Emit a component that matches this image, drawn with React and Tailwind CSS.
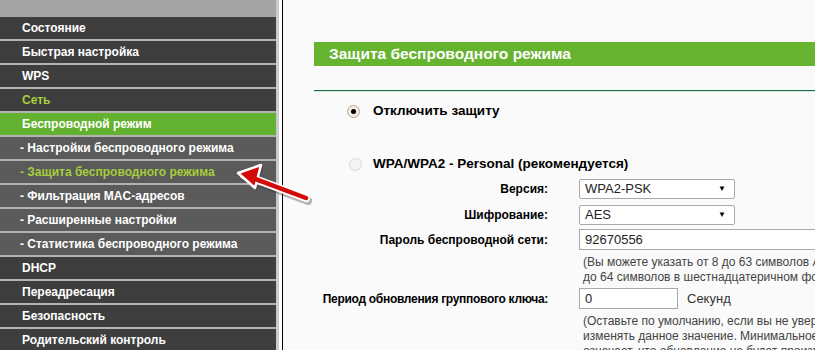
import React from "react";

const menu = [
  { label: "Состояние", kind: "main" },
  { label: "Быстрая настройка", kind: "main" },
  { label: "WPS", kind: "main" },
  { label: "Сеть", kind: "mainGreen" },
  { label: "Беспроводной режим", kind: "active" },
  { label: "- Настройки беспроводного режима", kind: "sub" },
  { label: "- Защита беспроводного режима", kind: "subGreen" },
  { label: "- Фильтрация MAC-адресов", kind: "sub" },
  { label: "- Расширенные настройки", kind: "sub" },
  { label: "- Статистика беспроводного режима", kind: "sub" },
  { label: "DHCP", kind: "main" },
  { label: "Переадресация", kind: "main" },
  { label: "Безопасность", kind: "main" },
  { label: "Родительский контроль", kind: "main" },
];

const rowStyles = {
  main: "bg-[#3e3e3e] text-white pl-[22px]",
  mainGreen: "bg-[#3e3e3e] text-[#a6cd3c] pl-[22px]",
  active: "bg-[#63b22f] text-white pl-[22px]",
  sub: "bg-[#5a5a5a] text-white pl-[20px]",
  subGreen: "bg-[#5a5a5a] text-[#a6cd3c] pl-[20px]",
};

function Radio({ checked }) {
  return checked ? (
    <span className="w-[13px] h-[13px] rounded-full border border-[#b8a996] bg-[#f1ebe3] flex items-center justify-center shrink-0">
      <span className="w-[5px] h-[5px] rounded-full bg-black" />
    </span>
  ) : (
    <span className="w-[13px] h-[13px] rounded-full border border-[#d6d6d6] bg-[#f4f4f4] shrink-0" />
  );
}

function Select({ value }) {
  return (
    <div className="w-[156px] h-[20px] border border-[#a9a9a9] rounded-[2px] bg-white flex items-center justify-between pl-[5px] pr-[8px] text-[13px] text-[#222]">
      <span>{value}</span>
      <span className="text-[8px] text-black">▼</span>
    </div>
  );
}

function Label({ children }) {
  return (
    <div className="w-[234px] shrink-0 flex justify-end font-bold text-[12px] text-black whitespace-nowrap">
      <span>{children}</span>
    </div>
  );
}

export default function App() {
  return (
    <div className="relative w-[815px] h-[350px] overflow-hidden flex bg-[#fafafa] font-['Liberation_Sans',Arial,sans-serif]">
      {/* sidebar */}
      <div className="w-[276px] shrink-0 bg-[#a4a4a4]">
        <div className="h-[17px] bg-[#a4a4a4]" />
        {menu.map((m) => (
          <div
            key={m.label}
            className={`h-[24px] border-b-2 border-[#b3b3b3] flex items-center font-bold text-[12px] whitespace-nowrap ${rowStyles[m.kind]}`}
          >
            {m.label}
          </div>
        ))}
      </div>
      <div className="w-[3px] bg-[#cbcbcb] shrink-0" />
      <div className="w-[3px] bg-white shrink-0" />
      <div className="w-[1px] bg-black shrink-0" />

      {/* content */}
      <div className="flex-1 min-w-0 pl-[31px] pt-[42px]">
        <div className="h-[24px] bg-[#65b32e] flex items-center pl-[15px] text-white font-bold text-[15.5px] whitespace-nowrap">
          Защита беспроводного режима
        </div>
        <div className="mt-[24px] h-[1px] bg-[#1d7049]" />
        <div className="h-[1px] bg-[#cfe6d6]" />

        <div className="mt-[9px] h-[20px] flex items-center pl-[33px] gap-[13px]">
          <Radio checked />
          <span className="font-bold text-[13.5px] text-black">Отключить защиту</span>
        </div>

        <div className="mt-[33px] h-[20px] flex items-center pl-[35px] gap-[11px]">
          <Radio />
          <span className="font-bold text-[13.5px] text-black whitespace-nowrap">WPA/WPA2 - Personal (рекомендуется)</span>
        </div>

        <div className="mt-[5px] flex items-center">
          <Label>Версия:</Label>
          <div className="ml-[31px]">
            <Select value="WPA2-PSK" />
          </div>
        </div>

        <div className="mt-[6px] flex items-center">
          <Label>Шифрование:</Label>
          <div className="ml-[31px]">
            <Select value="AES" />
          </div>
        </div>

        <div className="mt-[4px] flex items-center">
          <Label>Пароль беспроводной сети:</Label>
          <div className="ml-[31px] w-[260px] h-[21px] border border-[#a9a9a9] bg-white flex items-center pl-[5px] text-[13px] text-[#222] shrink-0">
            92670556
          </div>
        </div>

        <div className="mt-[5px] ml-[269px] text-[12px] leading-[15px] text-[#444] whitespace-nowrap">
          <div>(Вы можете указать от 8 до 63 символов ASCII или от 8</div>
          <div>до 64 символов в шестнадцатеричном формате.)</div>
        </div>

        <div className="mt-[3px] flex items-center">
          <Label>
            <span className="tracking-[-0.3px]">Период обновления группового ключа:</span>
          </Label>
          <div className="ml-[31px] w-[99px] h-[21px] border border-[#a9a9a9] bg-white flex items-center pl-[5px] text-[13px] text-[#222] shrink-0">
            0
          </div>
          <span className="ml-[9px] text-[13px] text-[#333]">Секунд</span>
        </div>

        <div className="mt-[5px] ml-[269px] text-[12px] leading-[15px] text-[#444] whitespace-nowrap">
          <div>(Оставьте по умолчанию, если вы не уверены, что нужно</div>
          <div>изменять данное значение. Минимальное значение 30, 0</div>
          <div>означает, что обновление не будет производиться.)</div>
        </div>
      </div>

      {/* red arrow pointing at the menu item */}
      <svg className="absolute left-[228px] top-[160px]" width="90" height="50" viewBox="0 0 90 50">
        <g transform="translate(2,3)" opacity="0.35">
          <line x1="16" y1="15" x2="78" y2="38" stroke="#333" strokeWidth="8" strokeLinecap="round" />
          <polygon points="10,13 33,5 27,28" fill="#333" />
        </g>
        <line x1="16" y1="15" x2="78" y2="38" stroke="#fff" strokeWidth="8" strokeLinecap="round" />
        <polygon points="10,13 33,5 27,28" fill="#d40a0a" stroke="#fff" strokeWidth="2.5" strokeLinejoin="round" />
        <line x1="22" y1="17" x2="78" y2="38" stroke="#d40a0a" strokeWidth="4.5" strokeLinecap="round" />
      </svg>
    </div>
  );
}
